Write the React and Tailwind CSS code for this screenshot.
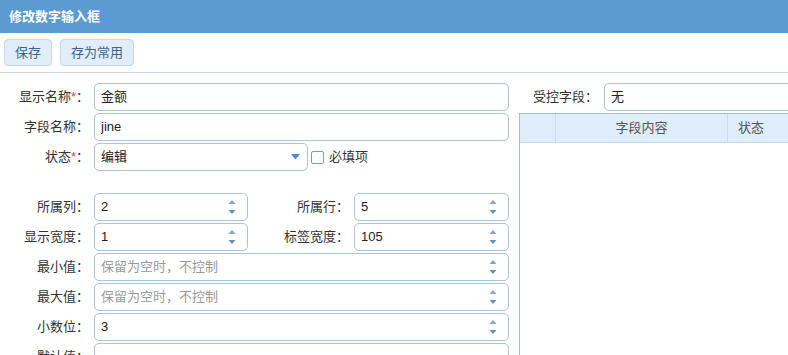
import React from "react";

const FONT = "font-['Liberation_Sans','Noto_Sans_CJK_SC',sans-serif]";

function Spinner() {
  return (
    <svg width="8" height="16" viewBox="0 0 8 16" className="shrink-0 mr-[11px]">
      <polygon points="4,1 7.5,5 0.5,5" fill="#7ea8d0" />
      <polygon points="0.5,11 7.5,11 4,15" fill="#5f90c2" />
    </svg>
  );
}

function Box({ children, className = "", spinner = false, placeholder = false }) {
  return (
    <div
      className={
        "h-[28px] flex items-center border border-[#a9c4dc] rounded-[5px] bg-white pl-[6px] text-[13px] " +
        (placeholder ? "text-[#9a9a9a] " : "text-[#222] ") +
        className
      }
    >
      <span className="flex-1 truncate">{children}</span>
      {spinner && <Spinner />}
    </div>
  );
}

function Label({ children, req = false, className = "w-[89px]" }) {
  return (
    <div className={"shrink-0 text-right text-[13px] text-[#333] whitespace-nowrap " + className}>
      {children}
      {req && <span className="text-[#e03c3c]">*</span>}
      ：
    </div>
  );
}

function Row({ children }) {
  return <div className="flex items-center h-[28px] gap-[5px]">{children}</div>;
}

export default function App() {
  return (
    <div className={"w-[788px] h-[355px] overflow-hidden bg-white " + FONT}>
      <div className="h-[33px] bg-[#5b9bd1] flex items-center pl-[9px] text-white font-bold text-[13px]">
        修改数字输入框
      </div>
      <div className="h-[40px] border-b border-[#c6d6e4] flex items-center gap-[8px] px-[4px]">
        <button className="h-[27px] px-[10px] rounded-[4px] border border-[#c4d8ec] bg-[#e1edf9] text-[13px] text-[#3a6590]">
          保存
        </button>
        <button className="h-[27px] px-[10px] rounded-[4px] border border-[#c4d8ec] bg-[#e1edf9] text-[13px] text-[#3a6590]">
          存为常用
        </button>
      </div>
      <div className="flex">
        <div className="w-[519px] shrink-0 pr-[10px] pt-[10px] flex flex-col gap-[2px]">
          <Row>
            <Label req>显示名称</Label>
            <Box className="flex-1">金额</Box>
          </Row>
          <Row>
            <Label>字段名称</Label>
            <Box className="flex-1">jine</Box>
          </Row>
          <Row>
            <Label req>状态</Label>
            <div className="w-[214px] h-[28px] flex items-center border border-[#a9c4dc] rounded-[5px] bg-white pl-[6px] text-[13px] text-[#222]">
              <span className="flex-1">编辑</span>
              <svg width="9" height="6" viewBox="0 0 9 6" className="mr-[7px]">
                <polygon points="0,0 9,0 4.5,5.5" fill="#4a8ad2" />
              </svg>
            </div>
            <div className="flex items-center gap-[5px] -ml-[2px]">
              <div className="w-[13px] h-[13px] border-[1.5px] border-[#7b9cc0] rounded-[2px] bg-white" />
              <span className="text-[13px] text-[#333]">必填项</span>
            </div>
          </Row>
          <div className="h-[18px]" />
          <Row>
            <Label>所属列</Label>
            <Box className="w-[154px]" spinner>2</Box>
            <Label className="w-[96px]">所属行</Label>
            <Box className="flex-1" spinner>5</Box>
          </Row>
          <Row>
            <Label>显示宽度</Label>
            <Box className="w-[154px]" spinner>1</Box>
            <Label className="w-[96px]">标签宽度</Label>
            <Box className="flex-1" spinner>105</Box>
          </Row>
          <Row>
            <Label>最小值</Label>
            <Box className="flex-1" spinner placeholder>保留为空时，不控制</Box>
          </Row>
          <Row>
            <Label>最大值</Label>
            <Box className="flex-1" spinner placeholder>保留为空时，不控制</Box>
          </Row>
          <Row>
            <Label>小数位</Label>
            <Box className="flex-1" spinner>3</Box>
          </Row>
          <Row>
            <Label>默认值</Label>
            <Box className="flex-1"></Box>
          </Row>
        </div>
        <div className="w-[400px] shrink-0 pt-[10px] flex flex-col gap-[2px]">
          <div className="flex items-center h-[28px] gap-[6px] pl-[14px]">
            <div className="shrink-0 text-[13px] text-[#333]">受控字段：</div>
            <Box className="flex-1">无</Box>
          </div>
          <div className="h-[300px] border-l border-t border-[#a3bfd9]">
            <div className="h-[29px] flex bg-[#dfecf9] border-b border-[#c5d9ec] text-[13px] text-[#555]">
              <div className="w-[36px] border-r border-[#cbdcec]" />
              <div className="w-[172px] border-r border-[#cbdcec] flex items-center justify-center">字段内容</div>
              <div className="flex-1 flex items-center pl-[10px]">状态</div>
            </div>
          </div>
        </div>
      </div>
    </div>
  );
}
